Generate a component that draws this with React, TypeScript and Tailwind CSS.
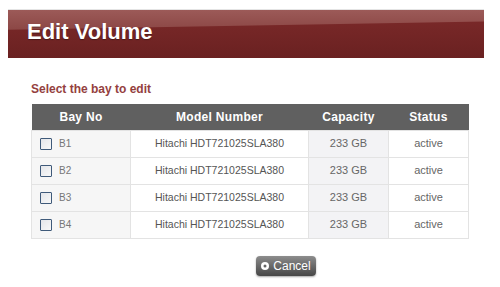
import React from "react";

const bays = ["B1", "B2", "B3", "B4"];

const App: React.FC = () => {
  return (
    <div
      className="w-[500px] h-[287px] bg-white overflow-hidden"
      style={{ fontFamily: '"Liberation Sans", Arial, sans-serif' }}
    >
      <div className="pt-[9px] px-[8px] w-[492px]">
        <div className="border-t border-[#e4e4e4]" />
        <div className="relative h-[48px] overflow-hidden bg-gradient-to-b from-[#7d2a2a] to-[#6a2121]">
          {/* glossy highlight */}
          <div className="absolute left-0 right-0 top-0 h-[22px] bg-gradient-to-b from-[#9c5a58] to-[#8a4543] [clip-path:polygon(0_0,100%_0,100%_52%,0_90%)]" />
          <h1 className="relative pl-[19px] pt-[9px] text-[22px] leading-[26px] font-bold text-white [text-shadow:0_1px_1px_rgba(0,0,0,0.35)]">
            Edit Volume
          </h1>
        </div>
      </div>

      <div className="pl-[31px] pt-[24px]">
        <p className="text-[12px] leading-[14px] font-bold text-[#94403e]">
          Select the bay to edit
        </p>

        <table className="mt-[8px] w-[437px] border-collapse table-fixed">
          <colgroup>
            <col className="w-[99px]" />
            <col className="w-[178px]" />
            <col className="w-[80px]" />
            <col className="w-[80px]" />
          </colgroup>
          <thead>
            <tr className="h-[26px] bg-[#606060] text-white text-[12px] font-bold">
              <th className="text-center font-bold tracking-[0.3px]">Bay No</th>
              <th className="text-center font-bold tracking-[0.3px]">Model Number</th>
              <th className="text-center font-bold tracking-[0.3px]">Capacity</th>
              <th className="text-center font-bold tracking-[0.3px]">Status</th>
            </tr>
          </thead>
          <tbody>
            {bays.map((bay) => (
              <tr key={bay} className="h-[27px] text-[11px] text-[#555]">
                <td className="border border-[#e3e3e3] bg-[#f6f6f6] pl-[8px]">
                  <div className="flex items-center gap-[7px]">
                    <span className="w-[12px] h-[12px] border border-[#3f5a7a] bg-gradient-to-br from-[#e4e6ea] to-[#f8f8f8] rounded-[1px]" />
                    <span className="text-[10px] text-[#777]">{bay}</span>
                  </div>
                </td>
                <td className="border border-[#e3e3e3] bg-white text-center text-[10.5px]">
                  Hitachi HDT721025SLA380
                </td>
                <td className="border border-[#e3e3e3] bg-[#f3f3f5] text-center text-[#666]">
                  233 GB
                </td>
                <td className="border border-[#e3e3e3] bg-white text-center text-[#666]">
                  active
                </td>
              </tr>
            ))}
          </tbody>
        </table>
      </div>

      <div className="flex justify-center pt-[17px] pl-[72px]">
        <button className="flex items-center gap-[4px] h-[20px] w-[60px] justify-center rounded-[4px] bg-gradient-to-b from-[#8d8d8d] to-[#474747] shadow-[0_1px_2px_rgba(0,0,0,0.35)] text-white text-[12px]">
          <svg width="8" height="8" viewBox="0 0 8 8">
            <circle cx="4" cy="4" r="4" fill="#fff" />
            <circle cx="4" cy="4" r="1.5" fill="#666" />
          </svg>
          Cancel
        </button>
      </div>
    </div>
  );
};

export default App;
